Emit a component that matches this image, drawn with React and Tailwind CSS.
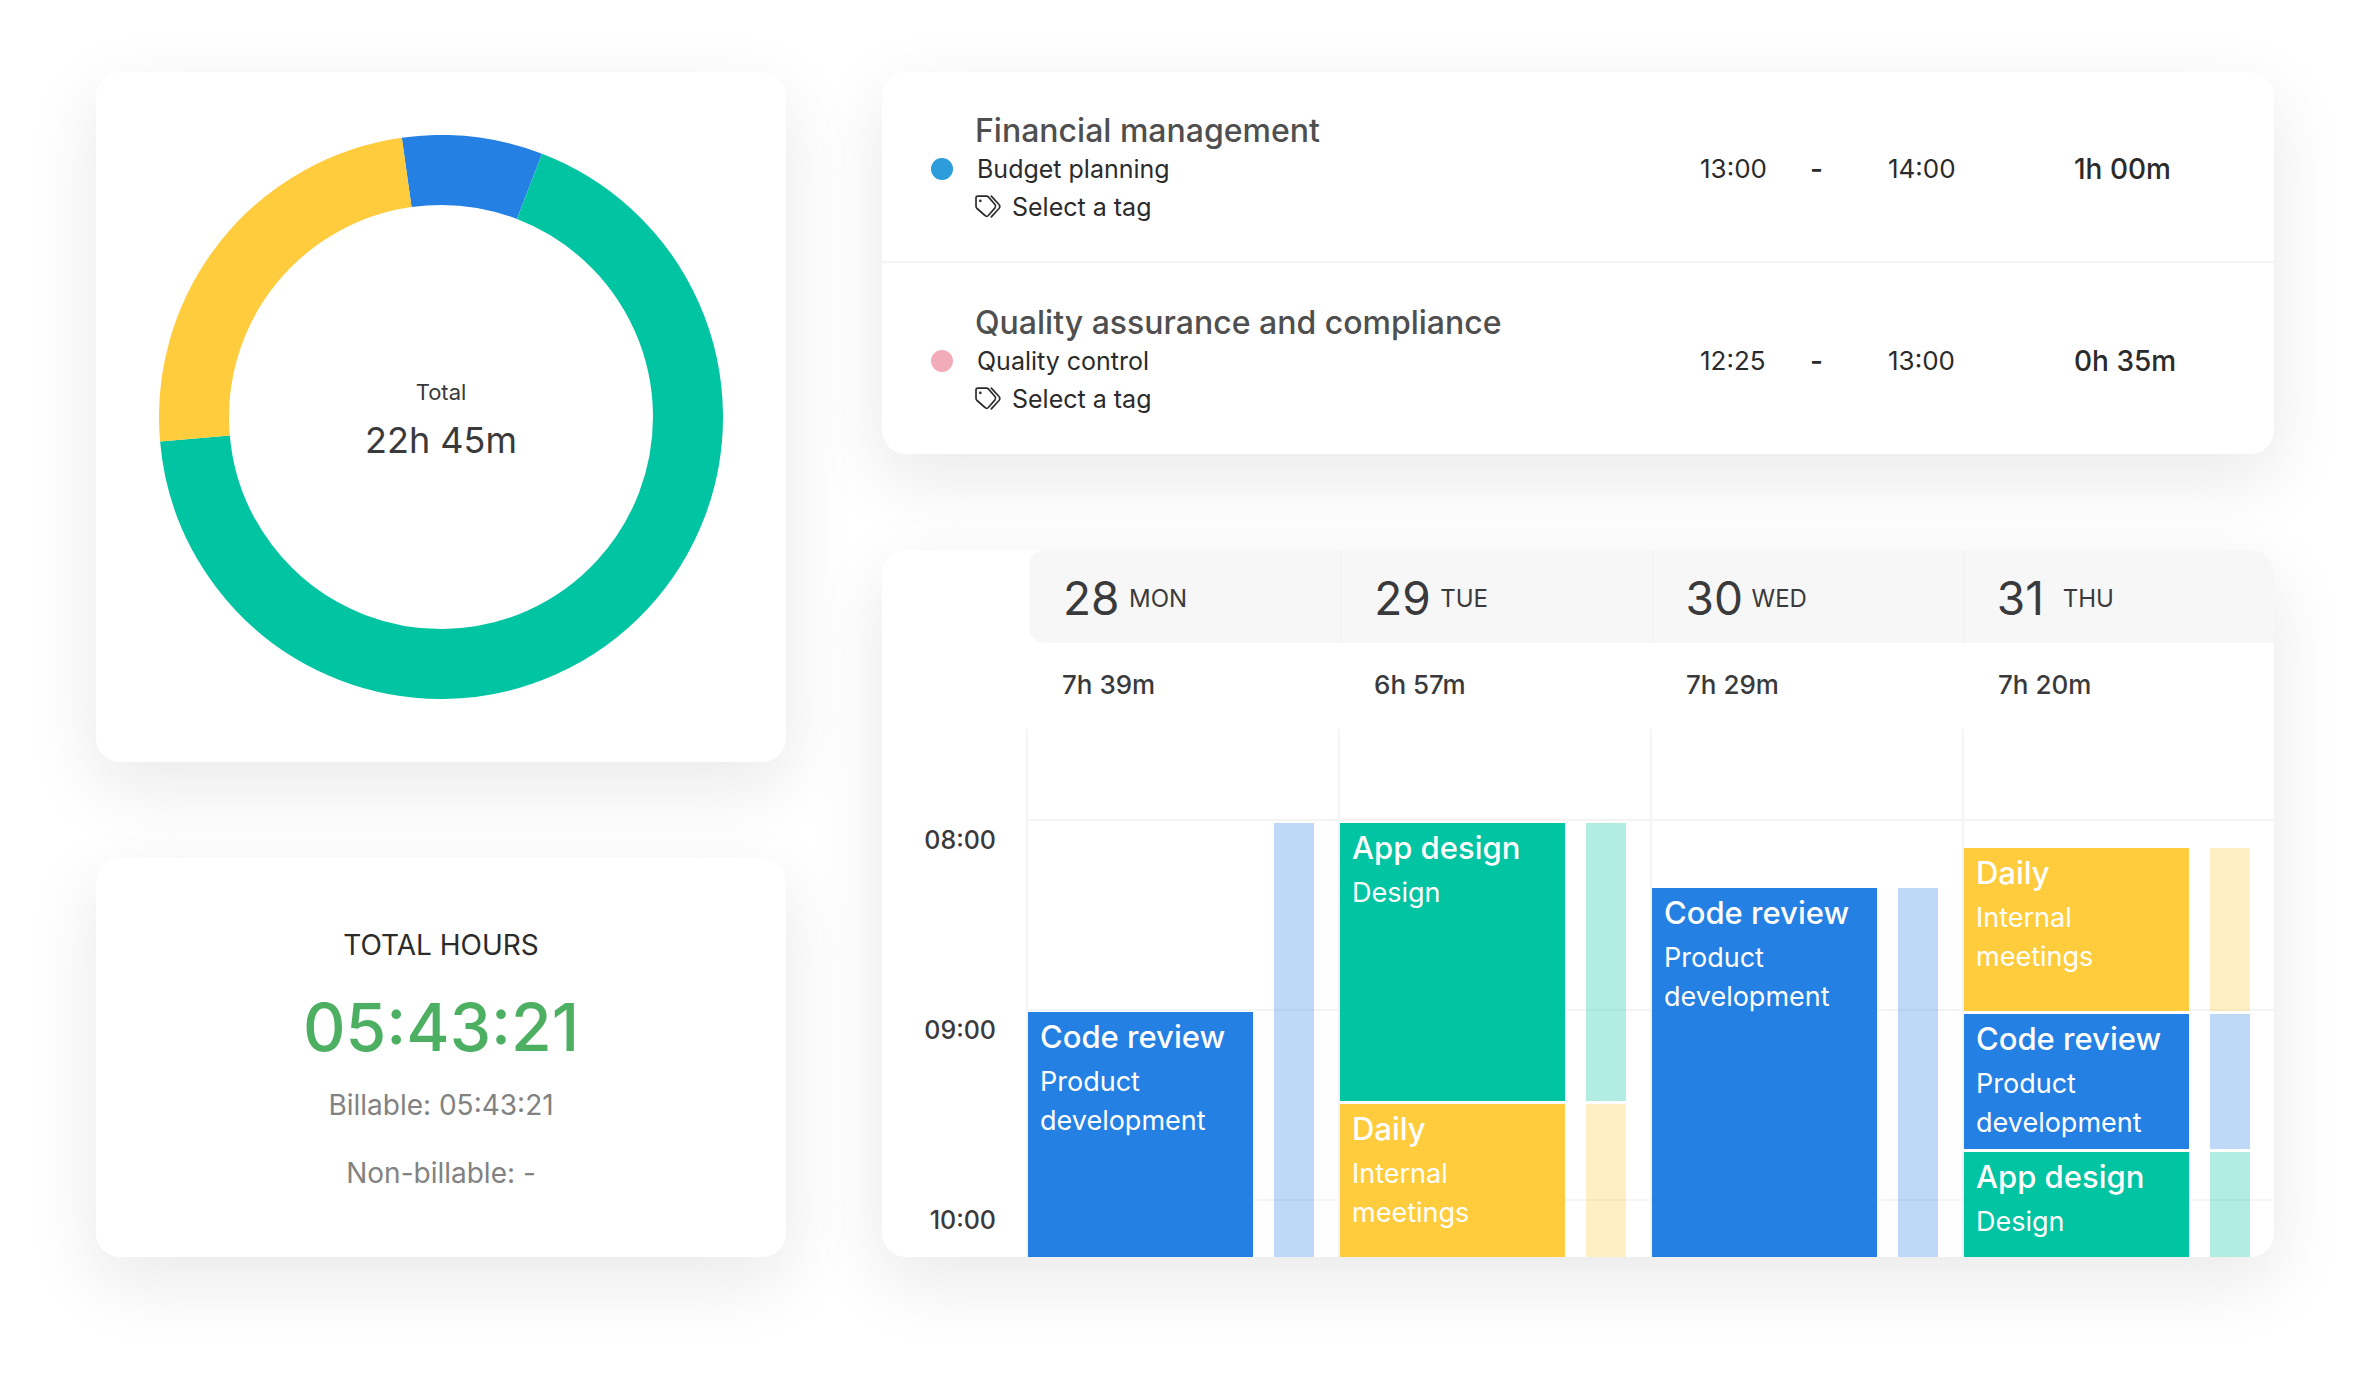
const COLORS = {
    blue: { solid: 'bg-[#2480e3]', pale: 'bg-[#2480e3]/30' },
    green: { solid: 'bg-[#01c4a3]', pale: 'bg-[#01c4a3]/30' },
    yellow: { solid: 'bg-[#ffcc3d]', pale: 'bg-[#ffcc3d]/30' },
};

// degrees, clockwise from 12 o'clock
const SEGMENTS = [
    { color: '#2480e3', from: -8, to: 21 },
    { color: '#01c4a3', from: 21, to: 265 },
    { color: '#ffcc3d', from: 265, to: 352 },
];

const ENTRIES = [
    { title: 'Financial management', project: 'Budget planning', dot: 'bg-[#2d9cdb]', start: '13:00', end: '14:00', duration: '1h 00m' },
    { title: 'Quality assurance and compliance', project: 'Quality control', dot: 'bg-[#f2acb9]', start: '12:25', end: '13:00', duration: '0h 35m' },
];

const HOURS = ['08:00', '09:00', '10:00'];

const review = { title: 'Code review', project: 'Product development', color: 'blue' };
const design = { title: 'App design', project: 'Design', color: 'green' };
const daily = { title: 'Daily', project: 'Internal meetings', color: 'yellow' };

const DAYS = [
    {
        date: '28', name: 'MON', total: '7h 39m',
        planned: { offset: 'pt-[283px]', events: [{ ...review, size: 'flex-1' }] },
        tracked: { offset: 'pt-[94px]', events: [{ ...review, size: 'flex-1' }] },
    },
    {
        date: '29', name: 'TUE', total: '6h 57m',
        planned: { offset: 'pt-[94px]', events: [{ ...design, size: 'h-[278px]' }, { ...daily, size: 'flex-1' }] },
    },
    {
        date: '30', name: 'WED', total: '7h 29m',
        planned: { offset: 'pt-[159px]', events: [{ ...review, size: 'flex-1' }] },
    },
    {
        date: '31', name: 'THU', total: '7h 20m',
        planned: {
            offset: 'pt-[119px]',
            events: [{ ...daily, size: 'h-[163px]' }, { ...review, size: 'h-[135px]' }, { ...design, size: 'flex-1' }],
        },
    },
];

function Card({ className = '', children }) {
    return (
        <section className={`rounded-3xl bg-white shadow-[0_24px_72px_rgba(16,16,28,0.095)] ${className}`}>
            {children}
        </section>
    );
}

function TagIcon() {
    return (
        <svg viewBox="0 0 78 68" className="h-[23px] w-[26px]" fill="none" stroke="currentColor" strokeWidth="5" strokeLinecap="round" strokeLinejoin="round" aria-hidden="true">
            <path d="M8 3H35Q38 3 40 5L60 28Q64 33 60 38L40 61Q35 66 30 61L6 40Q3 37 3 33V8Q3 3 8 3Z" />
            <path d="M49 3L72 28Q77 34 72 40L49 65" />
            <circle cx="16" cy="17" r="4" fill="currentColor" stroke="none" />
        </svg>
    );
}

function DonutCard() {
    return (
        <Card className="grid aspect-square place-items-center p-[63px]">
            <svg viewBox="0 0 564 564" className="col-start-1 row-start-1 w-full" role="img" aria-label="Tracked time by project">
                {SEGMENTS.map(({ color, from, to }) => (
                    <circle
                        key={color}
                        cx="282"
                        cy="282"
                        r="247"
                        fill="none"
                        stroke={color}
                        strokeWidth="70"
                        pathLength="360"
                        strokeDasharray={`${to - from} ${360 - (to - from)}`}
                        transform={`rotate(${from - 90} 282 282)`}
                    />
                ))}
            </svg>
            <div className="col-start-1 row-start-1 pt-2 text-center text-[#3a3a3c]">
                <p className="text-[22px] leading-8">Total</p>
                <p className="mt-1.5 text-[36px] leading-[52px]">22h 45m</p>
            </div>
        </Card>
    );
}

function TotalHoursCard() {
    return (
        <Card className="pt-[67px] pb-16 text-center text-[28px] leading-10 text-[#828282]">
            <h2 className="text-[#2b2b2b]">TOTAL HOURS</h2>
            <p className="mt-2 text-[66px] leading-[108px] font-medium text-[#4caf62]">05:43:21</p>
            <p className="mt-1">Billable: 05:43:21</p>
            <p className="mt-7">Non-billable: -</p>
        </Card>
    );
}

function EntryRow({ entry }) {
    return (
        <li className="grid h-[191px] grid-cols-[44px_1fr_110px_78px_186px_200px] items-center pt-1 pl-[49px] text-[#2b2b2b]">
            <span className={`size-[22px] rounded-full ${entry.dot}`} />
            <div>
                <h3 className="text-[32px] leading-[38px] font-medium text-[#4f4f4f]">{entry.title}</h3>
                <p className="pl-0.5 text-[25px] leading-[38px]">{entry.project}</p>
                <button type="button" className="flex items-center gap-[11px] text-[25px] leading-[38px]">
                    <TagIcon />
                    Select a tag
                </button>
            </div>
            <time className="text-[26px]">{entry.start}</time>
            <span className="text-[28px] font-medium">-</span>
            <time className="text-[26px]">{entry.end}</time>
            <span className="text-[28px] font-medium">{entry.duration}</span>
        </li>
    );
}

function EventBlock({ event }) {
    return (
        <div className={`shrink-0 overflow-hidden px-3 pt-1 text-white ${event.size} ${COLORS[event.color].solid}`}>
            <h4 className="text-[31px] leading-[42px] font-medium">{event.title}</h4>
            <p className="mt-1 text-[27px] leading-[39px]">{event.project}</p>
        </div>
    );
}

function DayColumn({ day }) {
    const { planned, tracked = planned } = day;
    return (
        <div className="flex gap-[21px] border-l-2 border-[#f4f4f4] pr-6">
            <div className={`flex min-w-0 flex-1 flex-col gap-[3px] ${planned.offset}`}>
                {planned.events.map((event) => (
                    <EventBlock key={event.title} event={event} />
                ))}
            </div>
            <div className={`flex w-10 flex-col gap-[3px] ${tracked.offset}`}>
                {tracked.events.map((event) => (
                    <div key={event.title} className={`${event.size} ${COLORS[event.color].pale}`} />
                ))}
            </div>
        </div>
    );
}

function CalendarCard() {
    return (
        <Card className="flex flex-1 flex-col overflow-hidden text-[#3a3a3c]">
            <div className="ml-[147px] grid h-[93px] grid-cols-4 rounded-l-2xl bg-[#f7f7f7]">
                {DAYS.map((day) => (
                    <div key={day.date} className="flex items-center border-l-2 border-[#f3f3f3] pt-1 pl-8 first:border-transparent">
                        <span className="w-[66px] text-[46px]">{day.date}</span>
                        <span className="text-[24px]">{day.name}</span>
                    </div>
                ))}
            </div>
            <div className="mb-1 ml-36 grid h-[82px] grid-cols-4 items-center text-[26px] font-medium">
                {DAYS.map((day) => (
                    <span key={day.date} className="pl-9">{day.total}</span>
                ))}
            </div>
            <div className="grid flex-1">
                <div className="col-start-1 row-start-1 pt-[90px]">
                    {HOURS.map((hour) => (
                        <div key={hour} className="flex h-[190px] last:h-[58px]">
                            <time className="w-36 pr-[30px] text-right text-[25px] leading-[42px] font-medium">{hour}</time>
                            <div className="flex-1 border-t-2 border-[#f4f4f4]" />
                        </div>
                    ))}
                </div>
                <div className="col-start-1 row-start-1 ml-36 grid grid-cols-4">
                    {DAYS.map((day) => (
                        <DayColumn key={day.date} day={day} />
                    ))}
                </div>
            </div>
        </Card>
    );
}

export default function App() {
    return (
        <main className="grid min-h-screen grid-cols-[115fr_232fr] items-start gap-24 bg-white px-24 pt-[72px] pb-[120px] font-['Inter',sans-serif]">
            <div className="flex flex-col gap-24">
                <DonutCard />
                <TotalHoursCard />
            </div>
            <div className="flex flex-col gap-24">
                <Card>
                    <ul className="divide-y-2 divide-[#f4f4f4]">
                        {ENTRIES.map((entry) => (
                            <EntryRow key={entry.title} entry={entry} />
                        ))}
                    </ul>
                </Card>
                <CalendarCard />
            </div>
        </main>
    );
}
